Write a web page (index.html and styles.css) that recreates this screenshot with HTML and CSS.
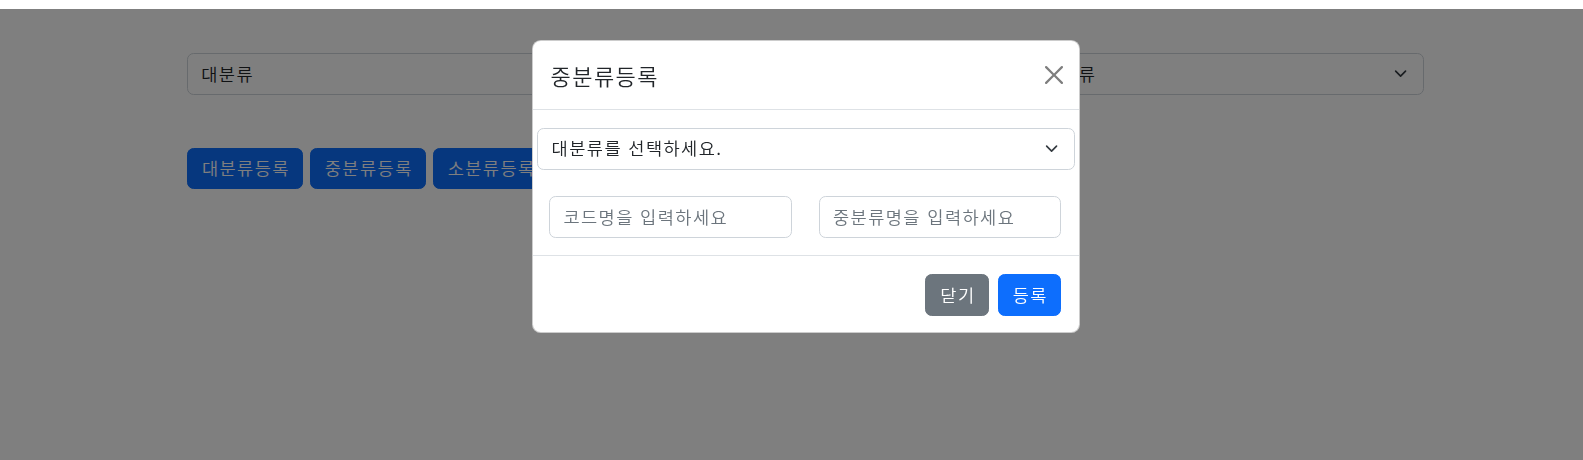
FILE: index.html
```html
<!DOCTYPE html>
<html lang="ko">
<head>
<meta charset="utf-8">
<title>분류 관리</title>
<link rel="stylesheet" href="styles.css">
</head>
<body>
<main class="page">
  <div class="filters">
    <div class="form-select"><span>대분류</span><svg class="chev" viewBox="0 0 16 16"><path d="m2 5 6 6 6-6"/></svg></div>
    <div class="form-select"><span>중분류</span><svg class="chev" viewBox="0 0 16 16"><path d="m2 5 6 6 6-6"/></svg></div>
    <div class="form-select"><span>소분류</span><svg class="chev" viewBox="0 0 16 16"><path d="m2 5 6 6 6-6"/></svg></div>
  </div>
  <div class="actions">
    <button class="btn btn-primary page-btn">대분류등록</button>
    <button class="btn btn-primary page-btn">중분류등록</button>
    <button class="btn btn-primary page-btn">소분류등록</button>
  </div>
</main>

<div class="backdrop"></div>

<div class="modal">
  <div class="modal-header">
    <h5 class="modal-title">중분류등록</h5>
    <button class="btn-close" aria-label="Close"><svg viewBox="0 0 16 16"><path d="M.293.293a1 1 0 0 1 1.414 0L8 6.586 14.293.293a1 1 0 1 1 1.414 1.414L9.414 8l6.293 6.293a1 1 0 0 1-1.414 1.414L8 9.414l-6.293 6.293a1 1 0 0 1-1.414-1.414L6.586 8 .293 1.707a1 1 0 0 1 0-1.414"/></svg></button>
  </div>
  <div class="modal-body">
    <div class="form-select modal-select"><span>대분류를 선택하세요.</span><svg class="chev" viewBox="0 0 16 16"><path d="m2 5 6 6 6-6"/></svg></div>
    <div class="fields">
      <input class="form-control" type="text" placeholder="코드명을 입력하세요">
      <input class="form-control" type="text" placeholder="중분류명을 입력하세요">
    </div>
  </div>
  <div class="modal-footer">
    <button class="btn btn-secondary">닫기</button>
    <button class="btn btn-primary">등록</button>
  </div>
</div>
</body>
</html>
```

FILE: styles.css
```css
html, body {
  height: 100%;
}

body {
  margin: 0;
  background: #fff;
  color: #212529;
  font-family: "Noto Sans CJK KR", "Noto Sans", sans-serif;
  font-size: 17.6px;
  font-weight: 350;
  line-height: 1.5;
  letter-spacing: 0.08em;
}

.page {
  padding: 53px 0 0 187px;
}

.filters {
  width: 1237px;
  display: grid;
  grid-template-columns: repeat(3, 1fr);
  gap: 26.4px;
}

.form-select {
  box-sizing: border-box;
  height: 42px;
  display: flex;
  align-items: center;
  justify-content: space-between;
  padding: 0 15.4px 0 13.2px;
  border: 1.1px solid #ced4da;
  border-radius: 6.6px;
  background: #fff;
  color: #212529;
}

.chev {
  width: 13.2px;
  height: 13.2px;
  flex: none;
}

.chev path {
  fill: none;
  stroke: #343a40;
  stroke-width: 2;
  stroke-linecap: round;
  stroke-linejoin: round;
}

.actions {
  margin-top: 53px;
  display: flex;
  gap: 6.5px;
}

.btn {
  box-sizing: border-box;
  height: 41.8px;
  display: inline-flex;
  align-items: center;
  justify-content: center;
  padding: 0 12.5px 0 13.9px;
  border: 1.1px solid transparent;
  border-radius: 6.6px;
  font-family: inherit;
  font-size: 17.6px;
  font-weight: 350;
  letter-spacing: 0.08em;
  line-height: 1.5;
  color: #fff;
  cursor: pointer;
}

.page-btn {
  height: 41px;
}

.btn-primary {
  background: #0d6efd;
  border-color: #0d6efd;
}

.btn-secondary {
  background: #6c757d;
  border-color: #6c757d;
}

.backdrop {
  position: fixed;
  top: 9px;
  left: 0;
  right: 0;
  bottom: 0;
  background: rgba(0, 0, 0, 0.5);
}

.modal {
  position: fixed;
  top: 40px;
  left: 532px;
  width: 548px;
  box-sizing: border-box;
  background: #fff;
  border: 1px solid rgba(0, 0, 0, 0.2);
  border-radius: 8.8px;
}

.modal-header {
  display: flex;
  align-items: center;
  justify-content: space-between;
  padding: 17.6px 16px 17.6px 17.6px;
  border-bottom: 1.1px solid #dee2e6;
}

.modal-title {
  margin: 0;
  font-size: 22px;
  line-height: 33px;
  font-weight: 350;
}

.btn-close {
  width: 18px;
  height: 18px;
  padding: 0;
  border: 0;
  background: transparent;
  opacity: 0.5;
  display: flex;
  cursor: pointer;
}

.btn-close svg {
  width: 18px;
  height: 18px;
  fill: #000;
}

.modal-body {
  padding: 17.6px;
}

.modal-select {
  margin: 0 -13.2px;
  height: 41.8px;
}

.fields {
  margin: 26.4px 0 0 -1.4px;
  display: grid;
  grid-template-columns: 1fr 1fr;
  gap: 27px;
}

.form-control {
  box-sizing: border-box;
  width: 100%;
  height: 41.8px;
  padding: 0 13.2px;
  border: 1.1px solid #ced4da;
  border-radius: 6.6px;
  font-family: inherit;
  font-size: 17.6px;
  font-weight: 350;
  letter-spacing: 0.08em;
  color: #212529;
  background: #fff;
  outline: none;
}

.form-control::placeholder {
  color: #6c757d;
}

.modal-footer {
  display: flex;
  justify-content: flex-end;
  gap: 8.8px;
  padding: 17.6px 17.6px 16px;
  border-top: 1.1px solid #dee2e6;
}
```
